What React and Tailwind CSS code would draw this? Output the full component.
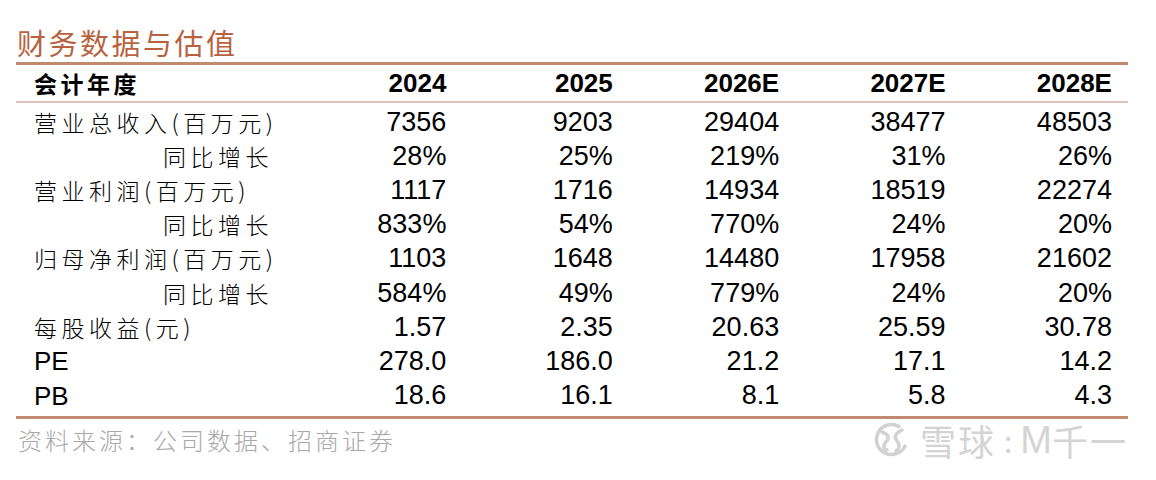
import React from 'react';

const rows = [
  { label: '营业总收入(百万元)', values: ['7356', '9203', '29404', '38477', '48503'] },
  { label: '同比增长', sub: true, values: ['28%', '25%', '219%', '31%', '26%'] },
  { label: '营业利润(百万元)', values: ['1117', '1716', '14934', '18519', '22274'] },
  { label: '同比增长', sub: true, values: ['833%', '54%', '770%', '24%', '20%'] },
  { label: '归母净利润(百万元)', values: ['1103', '1648', '14480', '17958', '21602'] },
  { label: '同比增长', sub: true, values: ['584%', '49%', '779%', '24%', '20%'] },
  { label: '每股收益(元)', values: ['1.57', '2.35', '20.63', '25.59', '30.78'] },
  { label: 'PE', latin: true, values: ['278.0', '186.0', '21.2', '17.1', '14.2'] },
  { label: 'PB', latin: true, values: ['18.6', '16.1', '8.1', '5.8', '4.3'] },
];

const years = ['2024', '2025', '2026E', '2027E', '2028E'];

const cjk = "font-['Noto_Sans_CJK_SC',sans-serif]";
const num = "font-['Liberation_Sans',Arial,sans-serif]";

const Row = ({ row }) => (
  <div className="grid grid-cols-[264px_repeat(5,166.4px)] h-[34.2px] items-center">
    <div
      className={`${row.latin ? num + ' text-[26px]' : cjk + ' text-[23px] tracking-[4.5px] font-light'} ${
        row.sub ? 'pl-[147px]' : 'pl-[18px]'
      } text-black leading-none whitespace-nowrap`}
    >
      {row.label}
    </div>
    {row.values.map((v, i) => (
      <div key={i} className={`${num} text-[27px] text-right text-black leading-none`}>
        {v}
      </div>
    ))}
  </div>
);

// 雪球 mark: open ring with two interlocking hooks
const Logo = () => (
  <svg width="40" height="36" viewBox="0 0 40 36" fill="none" stroke="#d2d2d2" strokeLinecap="round">
    <path d="M27 4.5 A15 15 0 1 0 33 24" strokeWidth="3.5" />
    <path d="M10 10 C16 12 18 16 14 20 C11 23 11 27 15 28" strokeWidth="3.5" />
    <path d="M30 8 C24 11 21 15 25 19 C28 22 28 26 24 29" strokeWidth="3.5" />
  </svg>
);

export default function App() {
  return (
    <div className="w-[1156px] h-[480px] bg-white overflow-hidden relative">
      <div className="pt-[25px] pl-[17px]">
        <div className={`${cjk} text-[29px] leading-[35px] text-[#b8633f] tracking-[2.5px]`}>财务数据与估值</div>
      </div>
      <div className="ml-4 w-[1112px] mt-[2px]">
        <div className="h-[3px] bg-[#c18a6d]" />
        <div className="grid grid-cols-[264px_repeat(5,166.4px)] h-[36px] items-center">
          <div className={`${cjk} pl-[18px] text-[23px] font-bold tracking-[3.5px] leading-none`}>会计年度</div>
          {years.map((y) => (
            <div key={y} className={`${num} text-right font-bold text-[26px] leading-none`}>
              {y}
            </div>
          ))}
        </div>
        <div className="h-[2px] bg-[#dcc5b8]" />
        <div className="pt-[2px]">
          {rows.map((r, i) => (
            <Row key={i} row={r} />
          ))}
        </div>
        <div className="h-[3px] bg-[#c18a6d] mt-[3px]" />
        <div className="flex items-center justify-between h-[42px]">
          <div className={`${cjk} font-light text-[24px] tracking-[3px] text-[#a8a8a8] pl-[2px]`}>
            资料来源：公司数据、招商证券
          </div>
          <div className={`flex items-center gap-2 text-[#d4d4d4] ${cjk} text-[36px] leading-none`}>
            <Logo />
            <span className="tracking-[2px]">雪球</span>
            <span className="text-[30px]">:</span>
            <span className={`${num} text-[38px]`}>M</span>
            <span className="-ml-2 tracking-[2px]">千一</span>
          </div>
        </div>
      </div>
    </div>
  );
}
